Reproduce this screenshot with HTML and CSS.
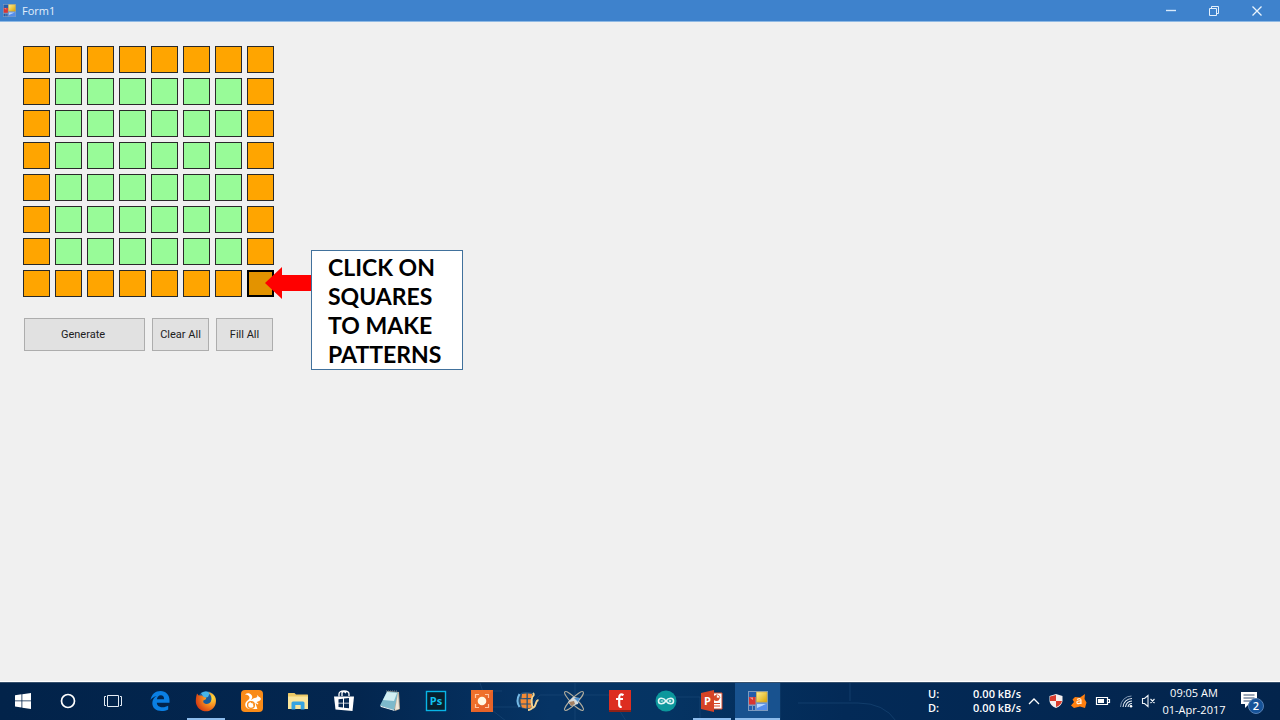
FILE: index.html
```html
<!DOCTYPE html>
<html lang="en">
<head>
<meta charset="utf-8">
<title>Form1</title>
<link rel="stylesheet" href="styles.css">
</head>
<body>
<header class="titlebar">
  <svg class="app-icon" viewBox="0 0 20 20" aria-hidden="true"><use href="#winform"/></svg>
  <h1 class="title">Form1</h1>
  <div class="window-controls">
    <button class="control" aria-label="Minimize"><svg width="12" height="12" viewBox="0 0 12 12"><path d="M1 5.500h10" stroke="#d9eafa" stroke-width="1.400"/></svg></button>
    <button class="control" aria-label="Restore"><svg width="12" height="12" viewBox="0 0 12 12" fill="none" stroke="#e4f0fb"><path d="M1.500 3.500h7v7h-7zM3.500 3.500v-2h7v7h-2"/></svg></button>
    <button class="control" aria-label="Close"><svg width="12" height="12" viewBox="0 0 12 12"><path d="M1.500 1.500l9 9m0-9l-9 9" stroke="#eaf4fd" stroke-width="1.300"/></svg></button>
  </div>
</header>

<main class="form">
  <div class="pattern" id="pattern"></div>
  <div class="actions">
    <button class="action wide" id="generate">Generate</button>
    <button class="action" id="clear">Clear All</button>
    <button class="action" id="fill">Fill All</button>
  </div>
  <div class="callout">
    <svg class="arrow" width="46" height="32" viewBox="0 0 46 32" aria-hidden="true"><path d="M0 16L17 0V8H46V24H17V32z" fill="#f00"/></svg>
    <p class="note">CLICK ON<br>SQUARES<br>TO MAKE<br>PATTERNS</p>
  </div>
</main>

<footer class="taskbar">
  <svg class="circuit" width="520" height="38" viewBox="0 0 520 38" fill="none" stroke="#1a4a78" stroke-width="1" aria-hidden="true"><path d="M0 0l8 24 18 14M8 24h40l12-12h70l16 26M95 0v38M180 14h40v24M300 0v38M318 20h60q26 0 38 18M370 18V0M0 8h22"/></svg>
  <nav class="apps">
    <button class="app system" aria-label="Start"><svg width="16" height="16" viewBox="0 0 16 16" fill="#fff"><path d="M0 2.300L6.500 1.300V7.500H0zM7.300 1.200L16 0V7.500H7.300zM0 8.300h6.500v6.200L0 13.500zM7.300 8.300H16V16L7.300 14.700z"/></svg></button>
    <button class="app system" aria-label="Cortana"><svg width="16" height="16" viewBox="0 0 16 16"><circle cx="8" cy="8" r="6.500" fill="none" stroke="#fff" stroke-width="1.700"/></svg></button>
    <button class="app system" aria-label="Task view"><svg width="20" height="14" viewBox="0 0 20 14" fill="none" stroke="#e4ebf4"><path d="M4.500 1.500h11v11h-11zM3 2.500H1.500v9H3M17 2.500h1.500v9H17"/></svg></button>
    <span class="divider"></span>
    <button class="app" aria-label="Edge"><svg width="20" height="20" viewBox="0 0 20 20"><path d="M.5 9C1.500 3.200 5.500 0 10.500 0 16 0 19.500 4 19.500 9.200v2.500H6.800c.2 3 2.700 4.500 5.700 4.500 2.200 0 4.100-.6 5.700-1.500v3.800c-2 1-4.200 1.500-6.700 1.500-5.700 0-9.200-3.200-9.200-8 0-3.300 2-5.900 4.500-7C4 5.500 2 7 .5 9zM6.900 8.300h7.200C14.100 5.700 13 4.300 10.800 4.300 8.600 4.300 7.200 6 6.900 8.300z" fill="#0a7fe3"/></svg></button>
    <button class="app running" aria-label="Firefox"><svg width="22" height="22" viewBox="0 0 22 22"><defs><radialGradient id="fox" cx=".8" cy=".3" r=".9"><stop offset="0" stop-color="#ffdd3d"/><stop offset=".45" stop-color="#f78b20"/><stop offset="1" stop-color="#cf3010"/></radialGradient></defs><circle cx="11.500" cy="10" r="9" fill="#185b9b"/><path d="M6 3q5-3 9 0l-2 4-4 1z" fill="#48b5e8"/><path d="M2 3.500l1.800 2L7 5.500l2.200 1.700 2.200.4-.6 1.700-2.700 1.400.5 2.100c3 2.400 6 .7 7.300-1.300 1.400-3.200.4-6.500-2.600-9.200C20 3 22 9 20.600 14 18.800 19.800 13.600 22 9.400 21.200 4 20.200.5 15.600.8 10.500.9 7.500 1.500 5.300 2 3.500z" fill="url(#fox)"/></svg></button>
    <button class="app" aria-label="UC Browser"><svg width="22" height="22" viewBox="0 0 22 22"><rect width="22" height="22" rx="4" fill="#f98b18"/><path d="M4 4.500c2-2 5-1.500 6.500.5 1.500 2 .5 4-1 5.500 2-2 5-2.500 6.800-3.500l-.2-2 2 2c1.700.4 2 1.900 1.400 3-1 1.300-3 1.500-4 2l2 1.800-.7.700-2.400-1.500 2 6H9C5 19 3 15 5 12c1.200-1.700 3.200-2.200 3.500-4C8.600 6 7 4.700 4 4.500z" fill="#fff"/><circle cx="10" cy="15" r="3.400" fill="none" stroke="#f98b18" stroke-width="1.300"/><path d="M10 12.500c2 0 3 1 2.500 3" stroke="#f98b18" fill="none"/></svg></button>
    <button class="app" aria-label="File Explorer"><svg width="20" height="18" viewBox="0 0 20 18"><path d="M0 1.500q0-.5.5-.5h6l1.500 1.500h11.500q.5 0 .5.500V16H0z" fill="#ecc966"/><path d="M0 4.500h20V17H0z" fill="#fae59b"/><path d="M3.500 17.500v-6.500q0-1.500 1.500-1.500h10q1.500 0 1.500 1.500v6.500h-3.800V13H7.300v4.500z" fill="#36a4e2"/></svg></button>
    <button class="app" aria-label="Store"><svg width="20" height="22" viewBox="0 0 20 22"><path d="M5 6.500V4q0-3 5-3t5 3v2M8 6V3q1-3 4 0" fill="none" stroke="#fff" stroke-width="1.300"/><path d="M0 6.500h20L18.500 21 1.500 19.500z" fill="#fff"/><path d="M4.500 9.200l4.500-.5v4H4.500zM10 8.600l5-.6v4.700h-5zM4.500 13.500H9v4l-4.500-.6zM10 13.500h5v4.800l-5-.6z" fill="#092b54"/></svg></button>
    <button class="app" aria-label="Notepad"><svg width="22" height="22" viewBox="0 0 22 22"><path d="M8 1l12 1 1 17-5 2z" fill="#b9aa96"/><path d="M8 1.500l11 1-4 18L1 15.500z" fill="#7db9cb"/><path d="M8 2l10 1-3 8-11-1z" fill="#d3eef2"/><path d="M1 15.500l14 4.500 1 1L2 17z" fill="#f3f8f8"/><path d="M19 3l1 16-4 1z" fill="#eee7da"/><path d="M7 1h12" stroke="#75818a" stroke-dasharray="1 1"/></svg></button>
    <button class="app" aria-label="Photoshop"><svg width="22" height="22" viewBox="0 0 22 22"><rect x="1.500" y="1.500" width="19" height="19" fill="#071f2e" stroke="#08b5e6" stroke-width="1.400"/><text x="11" y="15" class="ps">Ps</text></svg></button>
    <button class="app" aria-label="Screen recorder"><svg width="22" height="22" viewBox="0 0 22 22"><path d="M0 0h22v22H0z" fill="#ef702b"/><path d="M0 22L22 0v22z" fill="#e66328"/><circle cx="11" cy="11" r="4.300" fill="#fff9e5"/><path d="M4.500 8V4.500H8M14 4.500h3.500V8M17.500 14v3.500H14M8 17.500H4.500V14" fill="none" stroke="#ffc5a0" stroke-width="1.200"/></svg></button>
    <button class="app" aria-label="Movie maker"><svg width="22" height="20" viewBox="0 0 22 20"><path d="M4 2q4-2 12 0v14q-8 4-13 0-5-6 1-14z" fill="#24517a"/><path d="M5 3l4.500-.5v4.500l-5 .2zM3.500 8.200h6V12.500H3.800zM4 13.500h5.500v4L5 16.500zM10.800 2.500l4.200.5v4h-4.200zM10.800 8.200h4V12.500h-4zM10.800 13.500h3.500v3l-3.500 1z" fill="#f58a35"/><path d="M2.500 3q-4 7 0 13" fill="none" stroke="#75b9e5" stroke-width="2"/><path d="M15.500 6c-1.500 2-1 10 1 10.500 3-1 1.500-7 5-7.500M16 16q-2 3-5 3M16 2q2 2-1 4" fill="none" stroke="#f2d391" stroke-width="1.900"/></svg></button>
    <button class="app" aria-label="Satellite"><svg width="22" height="22" viewBox="0 0 22 22" fill="none"><g stroke="#b1ad9e" stroke-width="1.100"><ellipse cx="11" cy="11" rx="13" ry="3" transform="rotate(45 11 11)"/><ellipse cx="11" cy="11" rx="13" ry="3" transform="rotate(-45 11 11)"/></g><path d="M5 12l5-5 7 1-2 6-7 2z" fill="#d5dbdc"/><path d="M11 8l6 0-2 4z" fill="#4d91d2"/><path d="M6 12l5-1 1 3-4 2z" fill="#a58061"/></svg></button>
    <button class="app" aria-label="Fritzing"><svg width="22" height="22" viewBox="0 0 22 22"><path d="M0 0h22v22H0z" fill="#dd2e20"/><path d="M0 20h22v2H0z" fill="#8f2117"/><path d="M14.500 5.200C11.500 3.200 10.200 5 10.200 8V15q0 2 2.500 2M7 9h7" fill="none" stroke="#fff" stroke-width="2.200"/></svg></button>
    <button class="app" aria-label="Arduino"><svg width="22" height="22" viewBox="0 0 22 22"><circle cx="11" cy="11" r="10.500" fill="#0c979c"/><path d="M11 11C8.500 7.300 3.500 7.300 3.500 11S8.500 14.700 11 11s7.500-3.700 7.500 0S13.500 14.700 11 11z" fill="none" stroke="#e3f6f6" stroke-width="1.600"/><path d="M5.700 11h2.600M13.700 11h2.600M15 9.700v2.600" stroke="#e3f6f6"/></svg></button>
    <button class="app running" aria-label="PowerPoint"><svg width="22" height="22" viewBox="0 0 22 22"><path d="M12 3h9v16h-9z" fill="#fff" stroke="#d64b2a"/><circle cx="15.500" cy="8" r="3" fill="#d64b2a"/><path d="M15.500 8V4.500Q19 5 19 8z" fill="#fff" stroke="#d64b2a" stroke-width=".7"/><path d="M13 13.500h6M13 16h6" stroke="#d64b2a" stroke-width="1.200"/><path d="M0 3l13-3v22L0 19z" fill="#d64326"/><text x="6.500" y="15" class="pp">P</text></svg></button>
    <button class="app active" aria-label="Form1"><svg width="20" height="20" viewBox="0 0 20 20"><defs><linearGradient id="gold" x2="1" y2="1"><stop stop-color="#fff099"/><stop offset="1" stop-color="#dba500"/></linearGradient></defs><g id="winform"><path d="M0 0h20v20H0z" fill="#7d9bc0"/><path d="M1 1h7v5H1zM1 15h3v4H1zM5 15h2v4H5z" fill="#245caa"/><path d="M8.500 1H19v10H8.500z" fill="url(#gold)" stroke="#c9a43b" stroke-width=".6"/><path d="M1 6h6.500v7.500H1z" fill="#d93633"/><path d="M1.500 6.500H5V9z" fill="#f59b91"/><path d="M8.500 12.500H19V19H8.500z" fill="#558eeb"/><path d="M9 13h9l-9 4z" fill="#b8d6ff"/></g></svg></button>
  </nav>

  <section class="tray" aria-label="Notification area">
    <dl class="network"><dt>U:</dt><dd>0.00 kB/s</dd><dt>D:</dt><dd>0.00 kB/s</dd></dl>
    <div class="tray-icons">
      <svg width="14" height="14" viewBox="0 0 14 14"><path d="M2 10l5-5 5 5" fill="none" stroke="#fff" stroke-width="1.300"/></svg>
      <svg width="14" height="14" viewBox="0 0 14 14"><path d="M7 0l6.500 2v5Q13 11.500 7 14 1 11.500.5 7V2z" fill="#f4eeee"/><path d="M7 1v6H1V2.500zM7 7h6Q12 11 7 13z" fill="#d83b2d"/></svg>
      <svg width="16" height="14" viewBox="0 0 16 14"><path d="M14 0l-.5 5L15.500 8.500 14 14l-5-1.500L3 14 0 11.500 3 8 1.500 5.500 4 3l5 .5z" fill="#ff8010"/><path d="M6 5.500q4-2 4 1v3.500M10 7Q5 6.500 6 9q1.500 1.500 4-.5" fill="none" stroke="#fff2df" stroke-width="1.200"/></svg>
      <svg width="16" height="12" viewBox="0 0 16 12"><path d="M1.500 2.500h11v7h-11zM12.500 4.500h2v3h-2" fill="none" stroke="#fff" stroke-width="1.200"/><path d="M3 4h6v4H3z" fill="#fff"/></svg>
      <svg width="14" height="14" viewBox="0 0 14 14" fill="none"><path d="M1.500 13A11 11 0 0 1 12.500 2" stroke="#8298b4"/><path d="M4 13A9 9 0 0 1 13 4.500M6.500 13A7 7 0 0 1 13 7M9 13A4 4 0 0 1 13 9.500" stroke="#e6edf5" stroke-width="1.100"/><circle cx="12" cy="12.200" r="1.300" fill="#fff"/></svg>
      <svg width="16" height="14" viewBox="0 0 16 14" fill="none" stroke="#eef3f8"><path d="M1.500 4.500h2L7 1.500v11L3.500 9.500h-2zM9.500 5l4 4m0-4l-4 4" stroke-width="1.100"/></svg>
    </div>
    <time class="clock" datetime="2017-04-01T09:05">09:05 AM<br>01-Apr-2017</time>
    <button class="notifications" aria-label="2 notifications"><svg width="26" height="26" viewBox="0 0 26 26"><path d="M1 2h16v12H9l-4 4v-4H1z" fill="#fff"/><path d="M3.500 5h11M3.500 8h11M3.500 11h8" stroke="#344f72"/><circle cx="16" cy="16" r="7.500" fill="#155298" stroke="#5680b4"/><text x="16" y="20" class="count">2</text></svg></button>
  </section>
</footer>
<script src="script.js"></script>
</body>
</html>
```
FILE: styles.css
```css
* { box-sizing: border-box; }
body {
  margin: 0;
  min-height: 100vh;
  display: flex;
  flex-direction: column;
  background: #f0f0f0;
  font-family: "Open Sans", "Noto Sans", sans-serif;
}
button { margin: 0; padding: 0; border: 0; background: none; font-family: inherit; }
svg { display: block; flex: none; overflow: visible; }

.titlebar {
  display: flex;
  align-items: center;
  height: 22px;
  padding-left: 3px;
  background: #3e82cc;
  border-bottom: 1px solid #8fb9e4;
}
.app-icon { width: 13px; height: 13px; }
.title { margin: 0 0 0 6px; color: #e2eefb; font-size: 11px; font-weight: 400; line-height: 20px; }
.window-controls { display: flex; margin-left: auto; padding-right: 2px; }
.control { display: grid; place-items: center; width: 43px; height: 20px; }

.form { position: relative; flex: 1; padding: 24px 23px; border-bottom: 1px solid #fff; }
.pattern { display: grid; grid-template-columns: repeat(8, 27px); gap: 5px; }
.square { height: 27px; border: 1px solid #292929; background: #98fb98; }
.square.on { background: #ffa500; }
.square.current { border: 2px solid #000; background: #e39300; }
.actions { display: flex; gap: 7px; margin: 21px 0 0 1px; }
.action {
  width: 57px;
  height: 33px;
  border: 1px solid #adadad;
  background: #e1e1e1;
  color: #202020;
  font: 11px/16px Roboto, "Liberation Sans", sans-serif;
}
.wide { width: 121px; padding-right: 3px; }

/* annotation floating over the form */
.callout { position: absolute; left: 265px; top: 228px; display: flex; align-items: flex-start; }
.arrow { margin-top: 17px; }
.note {
  margin: 0;
  min-width: 152px;
  padding: 2px 16px 0 16px;
  min-height: 120px;
  border: 1px solid #41719c;
  background: #fff;
  color: #000;
  font: 700 23px/29px Lato, sans-serif;
}

.taskbar {
  position: relative;
  display: flex;
  justify-content: space-between;
  height: 38px;
  background: linear-gradient(90deg, #02234a, #03264f 28%, #063465 43%, #053463 52%, #032a57 66%, #03244c);
  border-top: 1px solid #37516e;
}
.circuit { position: absolute; left: 480px; top: 0; opacity: 0.6; }
.apps { position: relative; display: flex; }
.app { display: grid; place-items: center; position: relative; width: 46px; height: 37px; padding-bottom: 2px; }
.system { width: 45px; }
.divider { width: 2px; }
.running::after, .active::after {
  content: "";
  position: absolute;
  bottom: 0;
  left: 4px;
  right: 4px;
  height: 2px;
  background: #8dbcec;
}
.active { width: 45px; background: #18528f; }
.active::after { left: 0; right: 0; }
.ps { fill: #12c1f0; font: 700 11px "Open Sans", sans-serif; text-anchor: middle; }
.pp { fill: #fff; font: 700 11px "Open Sans", sans-serif; text-anchor: middle; }
.count { fill: #fff; font: 600 11px "Open Sans", sans-serif; text-anchor: middle; }

.tray { position: relative; display: flex; align-items: center; color: #fff; padding: 0 14px 2px 0; }
.network {
  display: grid;
  grid-template-columns: auto auto;
  justify-content: space-between;
  width: 93px;
  margin: 0 6px 0 0;
  font: 600 11px/14px "Open Sans", sans-serif;
}
.network dt, .network dd { margin: 0; }
.network dd { text-align: right; }
.tray-icons { display: flex; align-items: center; gap: 8px; }
.clock { width: 66px; margin-left: 4px; font-size: 11px; line-height: 17px; text-align: center; white-space: nowrap; }
.notifications { margin: 4px 0 0 13px; }
```
FILE: script.js
```js
const pattern = document.getElementById("pattern");
const size = 8;

for (let i = 0; i < size * size; i++) {
  const row = Math.floor(i / size);
  const col = i % size;
  const edge = row === 0 || col === 0 || row === size - 1 || col === size - 1;
  const square = document.createElement("button");
  square.className = "square" + (edge ? " on" : "");
  square.setAttribute("aria-label", `Row ${row + 1}, column ${col + 1}`);
  square.addEventListener("click", () => {
    square.classList.toggle("on");
    select(square);
  });
  pattern.append(square);
}

const squares = [...pattern.children];

function select(square) {
  squares.forEach((s) => s.classList.toggle("current", s === square));
}

select(squares[squares.length - 1]);
document.getElementById("clear").addEventListener("click", () => squares.forEach((s) => s.classList.remove("on")));
document.getElementById("fill").addEventListener("click", () => squares.forEach((s) => s.classList.add("on")));
```
